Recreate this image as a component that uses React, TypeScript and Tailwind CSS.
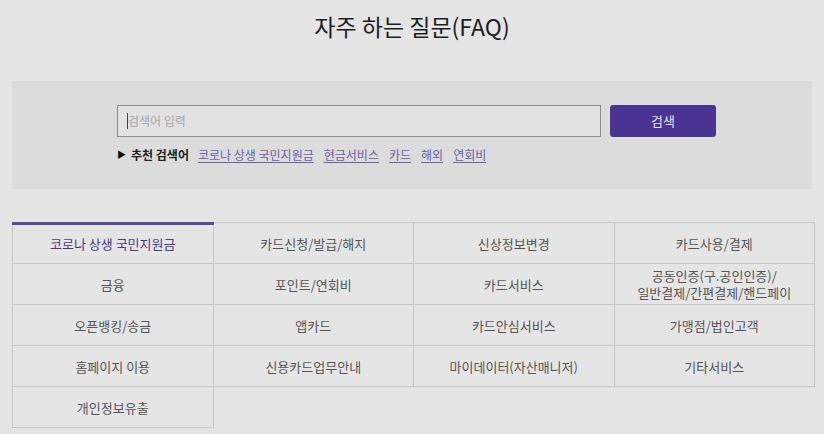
const categories = [
  "코로나 상생 국민지원금",
  "카드신청/발급/해지",
  "신상정보변경",
  "카드사용/결제",
  "금융",
  "포인트/연회비",
  "카드서비스",
  "공동인증(구.공인인증)/\n일반결제/간편결제/핸드페이",
  "오픈뱅킹/송금",
  "앱카드",
  "카드안심서비스",
  "가맹점/법인고객",
  "홈페이지 이용",
  "신용카드업무안내",
  "마이데이터(자산매니저)",
  "기타서비스",
  "개인정보유출",
];

const keywords = ["코로나 상생 국민지원금", "현금서비스", "카드", "해외", "연회비"];

export default function App() {
  return (
    <div
      className="w-[824px] h-[434px] overflow-hidden bg-[#e5e5e5] text-[#333]"
      style={{ fontFamily: '"Noto Sans CJK KR", "Noto Sans", sans-serif' }}
    >
      <h1 className="pt-[9px] text-center text-[23px] leading-[34px] text-[#1e1e1e]">
        자주 하는 질문(FAQ)
      </h1>

      <div className="mx-[12px] mt-[38px] h-[108px] bg-[#dcdcdc] pl-[105px] pt-[24px]">
        <div className="flex gap-[9px]">
          <div className="flex h-[32px] w-[484px] items-center border border-[#8c8c8c] bg-[#e2e2e2] px-[9px]">
            <span className="h-[16px] w-px bg-[#444]" />
            <span className="text-[12px] text-[#a6a6a6]">검색어 입력</span>
          </div>
          <button className="h-[32px] w-[106px] rounded-[3px] bg-[#4a3391] text-[13px] text-[#e4e0f0]">
            검색
          </button>
        </div>
        <div className="mt-[9px] flex items-center text-[12px]">
          <span className="mr-[5px] text-[9px] text-[#111]">▶</span>
          <span className="mr-[9px] font-bold text-[#222]">추천 검색어</span>
          <div className="flex gap-[10px]">
            {keywords.map((k) => (
              <span key={k} className="text-[#6b5fa8] underline underline-offset-2">
                {k}
              </span>
            ))}
          </div>
        </div>
      </div>

      <div className="mx-[12px] mt-[33px] grid w-[803px] grid-cols-4 border-l border-t border-[#c6c6c6]">
        {categories.map((c, i) => (
          <div
            key={c}
            className={
              "relative flex h-[41px] items-center justify-center whitespace-pre-line border-b border-r border-[#c6c6c6] text-center text-[13px] leading-[17px] " +
              (i === 0 ? "text-[#4a3b8a]" : "text-[#555]")
            }
          >
            {i === 0 && (
              <span className="absolute -left-px -right-px -top-px h-[3px] bg-[#5a4a9a]" />
            )}
            {c}
          </div>
        ))}
      </div>
    </div>
  );
}
